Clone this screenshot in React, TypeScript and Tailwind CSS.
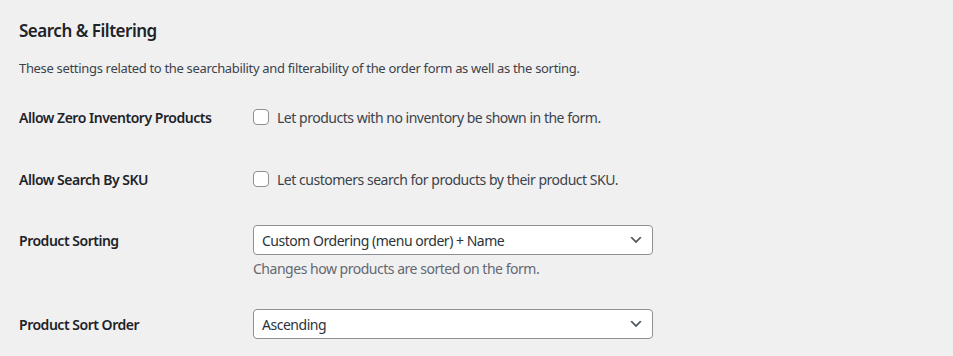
import React from 'react';

const font = { fontFamily: '"Noto Sans", "Open Sans", sans-serif' };

const Checkbox: React.FC<{ label: string }> = ({ label }) => (
  <label className="flex items-center gap-2 text-[14px] text-[#3c434a]">
    <span className="w-4 h-4 shrink-0 rounded-[4px] border border-[#8c8f94] bg-white" />
    {label}
  </label>
);

const Select: React.FC<{ value: string }> = ({ value }) => (
  <div className="flex items-center justify-between w-[400px] h-[30px] pl-2 pr-2 rounded-[4px] border border-[#8c8f94] bg-white text-[14px] text-[#2c3338]">
    <span>{value}</span>
    <svg width="16" height="16" viewBox="0 0 20 20" className="text-[#50575e]">
      <path d="M5 6l5 5 5-5 2 1-7 7-7-7z" fill="currentColor" />
    </svg>
  </div>
);

const App: React.FC = () => {
  return (
    <div className="w-[953px] h-[356px] overflow-hidden bg-[#f0f0f1] px-[19px] tracking-[-0.03em]" style={font}>
      <h2 className="pt-[20px] text-[17px] leading-[22px] font-semibold text-[#1d2327]">Search &amp; Filtering</h2>
      <p className="mt-[17px] text-[13px] leading-[18px] tracking-[-0.025em] text-[#3c434a]">
        These settings related to the searchability and filterability of the order form as well as the sorting.
      </p>

      {/* Allow zero inventory */}
      <div className="flex items-center mt-[30px] h-5">
        <div className="w-[234px] text-[14px] font-semibold text-[#1d2327]">Allow Zero Inventory Products</div>
        <Checkbox label="Let products with no inventory be shown in the form." />
      </div>

      {/* Allow search by SKU */}
      <div className="flex items-center mt-[42px] h-5">
        <div className="w-[234px] text-[14px] font-semibold text-[#1d2327]">Allow Search By SKU</div>
        <Checkbox label="Let customers search for products by their product SKU." />
      </div>

      {/* Product sorting */}
      <div className="flex mt-[36px]">
        <div className="w-[234px] h-[30px] flex items-center text-[14px] font-semibold text-[#1d2327]">Product Sorting</div>
        <div>
          <Select value="Custom Ordering (menu order) + Name" />
          <p className="mt-[4px] text-[14px] leading-[20px] text-[#646970]">Changes how products are sorted on the form.</p>
        </div>
      </div>

      {/* Sort order */}
      <div className="flex mt-[30px]">
        <div className="w-[234px] h-[30px] flex items-center text-[14px] font-semibold text-[#1d2327]">Product Sort Order</div>
        <Select value="Ascending" />
      </div>
    </div>
  );
};

export default App;
